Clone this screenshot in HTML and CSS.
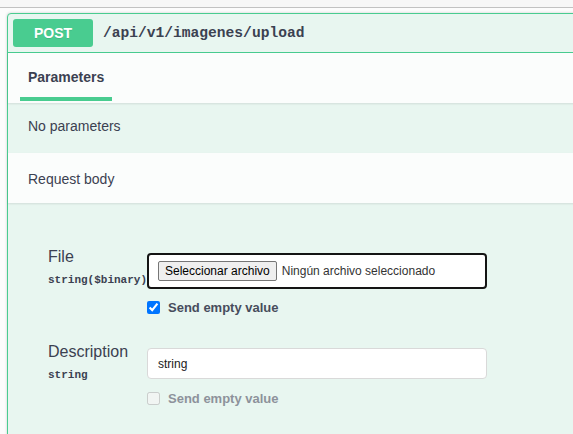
FILE: index.html
```html
<!DOCTYPE html>
<html lang="es">
<head>
<meta charset="utf-8">
<title>POST /api/v1/imagenes/upload</title>
<link rel="stylesheet" href="styles.css">
</head>
<body>
<div class="topbar"></div>
<div class="page">
  <div class="opblock">
    <div class="summary">
      <span class="method">POST</span>
      <span class="path">/api/v1/imagenes/upload</span>
    </div>
    <div class="section-header tabs">
      <div class="tab">Parameters</div>
    </div>
    <div class="description">No parameters</div>
    <div class="section-header rb-header">Request body</div>
    <div class="body">
      <div class="param">
        <div class="name">
          <div class="title">File</div>
          <div class="type">string($binary)</div>
        </div>
        <div class="value">
          <div class="file-box">
            <span class="file-btn">Seleccionar archivo</span>
            <span class="file-name">Ningún archivo seleccionado</span>
          </div>
          <label class="empty"><input type="checkbox" checked>Send empty value</label>
        </div>
      </div>
      <div class="param param-2">
        <div class="name">
          <div class="title">Description</div>
          <div class="type">string</div>
        </div>
        <div class="value">
          <input class="text-input" type="text" value="string">
          <label class="empty disabled"><input type="checkbox" disabled>Send empty value</label>
        </div>
      </div>
    </div>
  </div>
</div>
</body>
</html>
```

FILE: styles.css
```css
* { box-sizing: border-box; }
html, body { margin: 0; padding: 0; }
body {
  background: #fafafa;
  font-family: "Liberation Sans", Arial, sans-serif;
  color: #3b4151;
  width: 573px;
  height: 434px;
  overflow: hidden;
}
.topbar {
  height: 8px;
  background: #f7f7f7;
  border-bottom: 1px solid #c2c2c2;
}
.page {
  padding: 5px 0 0 7px;
  background: #fcfcfc;
  height: 426px;
  overflow: hidden;
}
.opblock {
  width: 600px;
  min-height: 460px;
  border: 1px solid #49cc90;
  border-radius: 4px;
  background: #e8f6f0;
  box-shadow: 0 0 3px rgba(0,0,0,.19);
}
.summary {
  display: flex;
  align-items: center;
  padding: 5px;
  border-bottom: 1px solid #49cc90;
}
.method {
  min-width: 80px;
  padding: 6px 0;
  line-height: 16px;
  font-size: 14px;
  font-weight: 700;
  color: #fff;
  text-align: center;
  background: #49cc90;
  border-radius: 3px;
  text-shadow: 0 1px 0 rgba(0,0,0,.1);
  margin-right: 10px;
}
.path {
  font-family: "Liberation Mono", "DejaVu Sans Mono", monospace;
  font-size: 14.6px;
  font-weight: 700;
  color: #3b4151;
}
.section-header {
  position: relative;
  background: rgba(255,255,255,.8);
  box-shadow: 0 1px 2px rgba(0,0,0,.1);
  font-size: 14px;
  line-height: 18px;
}
.tabs {
  padding: 0 0 2px 12px;
}
.tab {
  display: inline-block;
  padding: 16px 8px 11px;
  line-height: 17px;
  font-weight: 700;
  border-bottom: 4px solid #49cc90;
}
.description {
  padding: 14px 20px 18px;
  font-size: 14px;
  line-height: 18px;
}
.rb-header {
  padding: 17px 20px 15px;
}
.body {
  padding: 45px 0 40px 40px;
}
.param {
  display: flex;
  align-items: flex-start;
}
.param-2 {
  margin-top: 27px;
}
.name {
  width: 99px;
  flex: none;
}
.title {
  font-size: 16px;
  line-height: 18px;
}
.type {
  margin-top: 7px;
  font-family: "Liberation Mono", "DejaVu Sans Mono", monospace;
  font-size: 11px;
  line-height: 14px;
  font-weight: 700;
}
.value {
  margin-top: 5px;
}
.file-box {
  width: 340px;
  height: 36px;
  display: flex;
  align-items: center;
  padding: 0 9px;
  border: 2px solid #141414;
  border-radius: 4px;
  background: #fff;
  font-size: 12px;
}
.file-btn {
  padding: 2px 6px 1px;
  line-height: 15px;
  border: 1px solid #767676;
  border-radius: 2px;
  background: #efefef;
  color: #000;
  margin-right: 5px;
}
.file-name {
  color: #333;
}
.empty {
  display: flex;
  align-items: center;
  height: 18px;
  margin-top: 9px;
  font-size: 13px;
  font-weight: 700;
  color: #474d5c;
}
.empty input {
  width: 13px;
  height: 13px;
  margin: 0 8px 0 0;
}
.text-input {
  display: block;
  width: 340px;
  height: 31px;
  margin: 0;
  padding: 0 10px;
  border: 1px solid #d9d9d9;
  border-radius: 4px;
  background: #fff;
  font-family: "Liberation Sans", Arial, sans-serif;
  font-size: 12px;
  color: #1a1a1a;
}
.empty.disabled {
  margin-top: 10px;
  color: #8d929b;
}
```
